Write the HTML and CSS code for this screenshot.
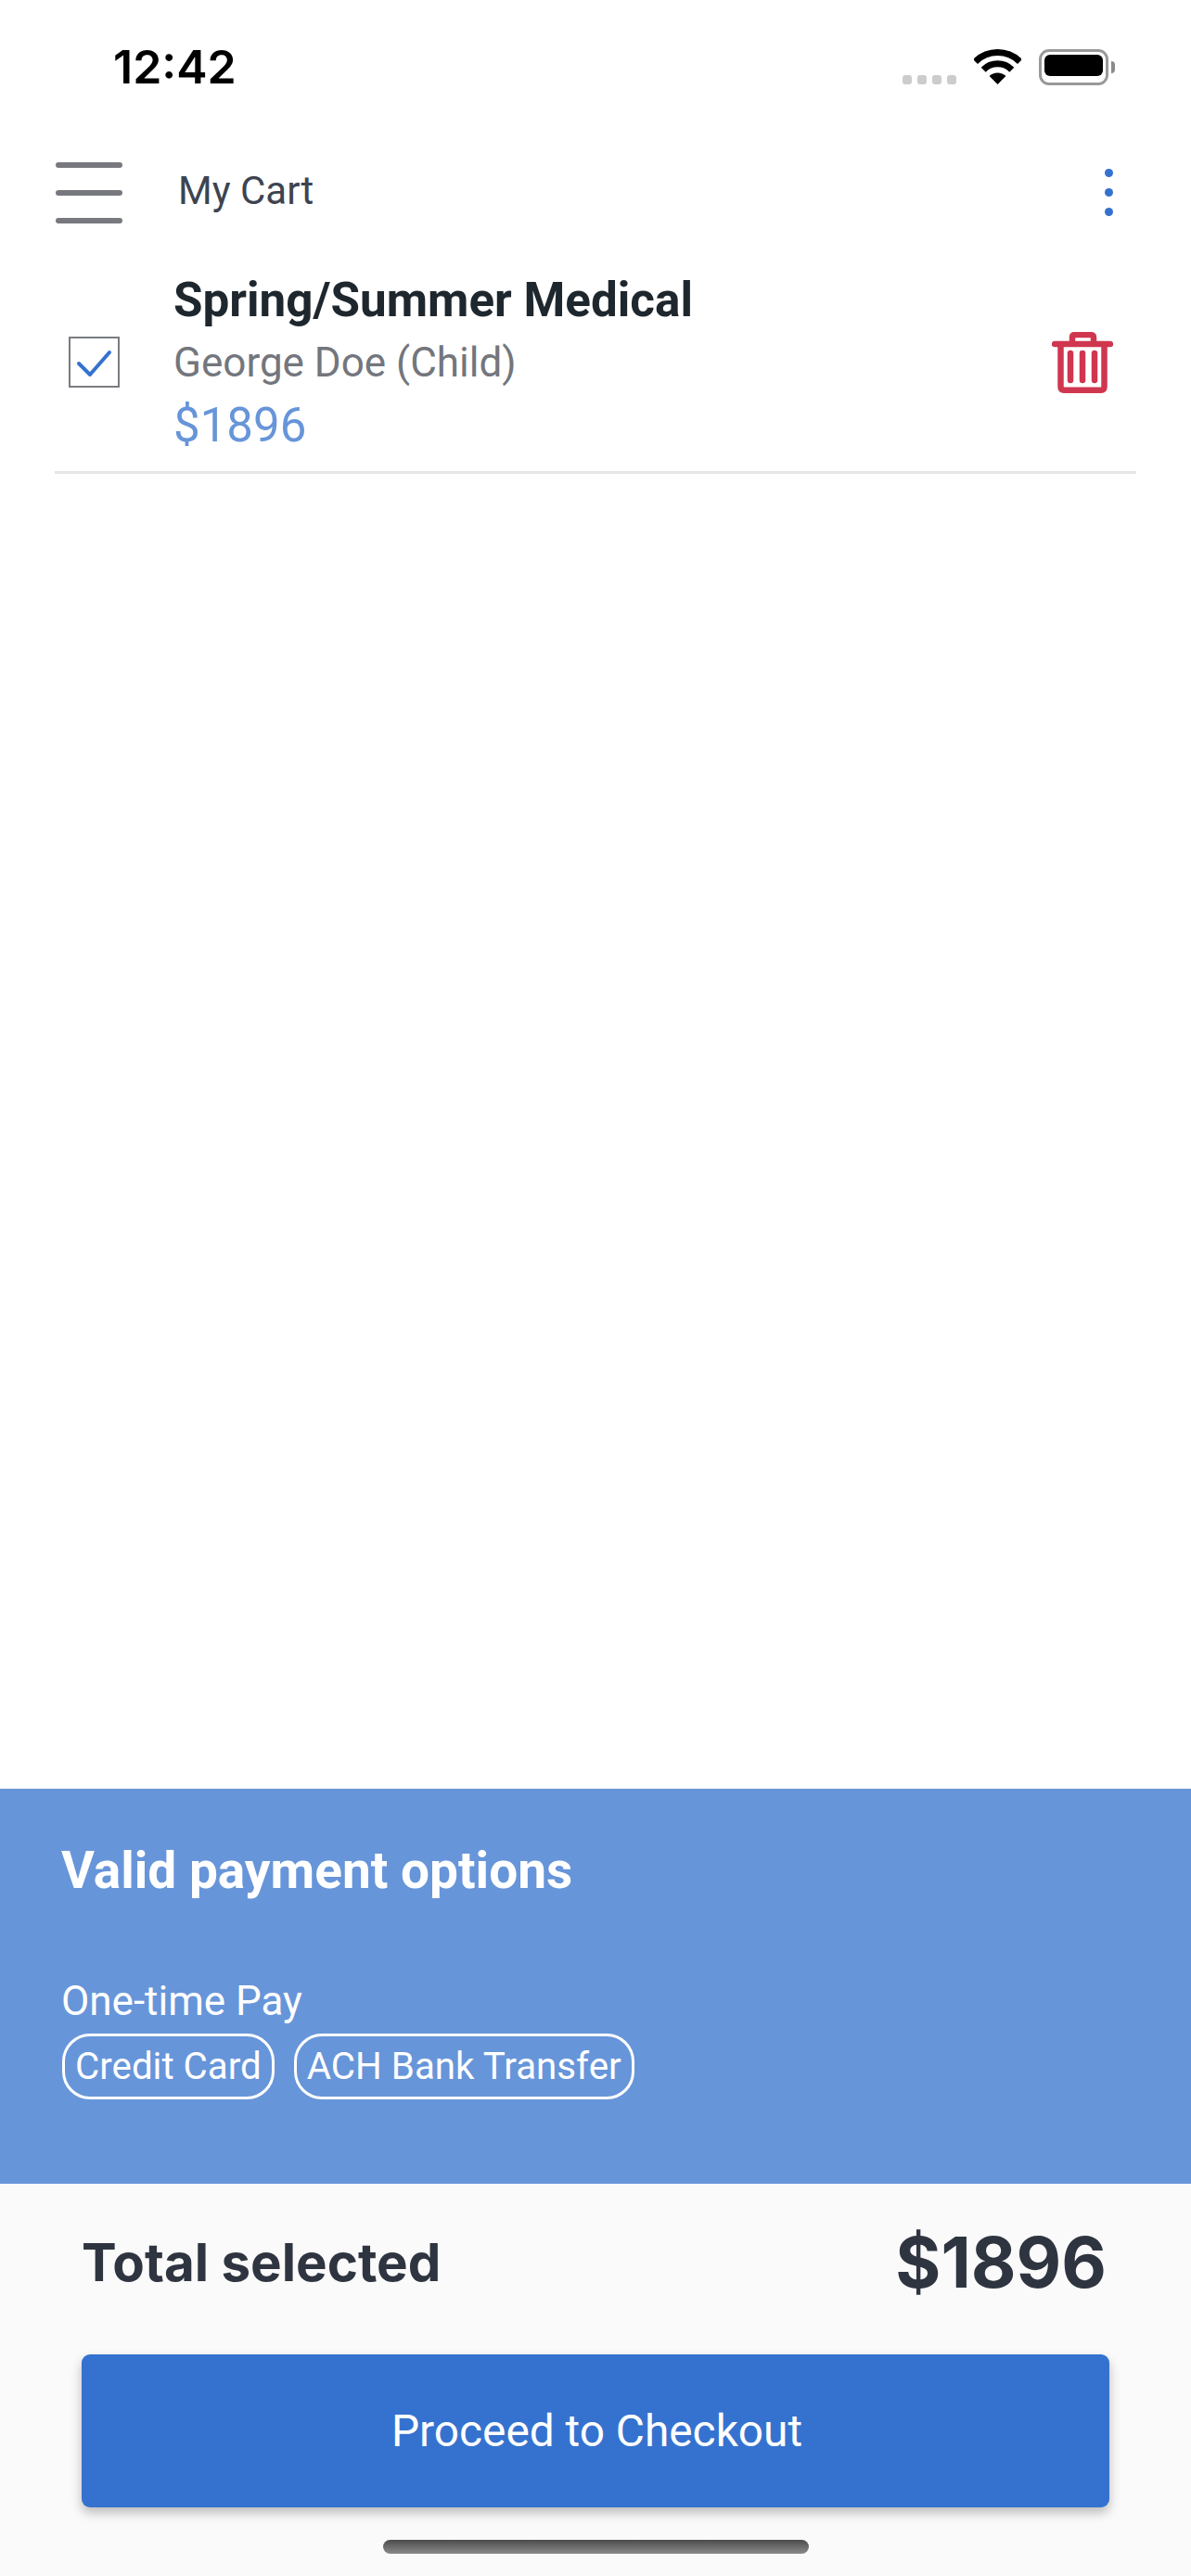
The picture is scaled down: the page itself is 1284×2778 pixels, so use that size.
FILE: index.html
```html
<!DOCTYPE html>
<html lang="en">
<head>
  <meta charset="UTF-8">
  <meta name="viewport" content="width=device-width, initial-scale=1.0">
  <title>My Cart</title>
  <link rel="stylesheet" href="styles.css">
</head>
<body>
  <!-- status bar -->
  <div class="status-bar">
    <span class="clock">12:42</span>
    <div class="status-icons">
      <div class="signal"><i></i><i></i><i></i><i></i></div>
      <svg class="wifi" width="51" height="38" viewBox="0 0 51 38">
        <path d="M1.5 13.5A34 34 0 0 1 49.5 13.5" fill="none" stroke="#000" stroke-width="7"/>
        <path d="M10.2 22.2A21.6 21.6 0 0 1 40.8 22.2" fill="none" stroke="#000" stroke-width="7"/>
        <path d="M25.5 38L16.6 29.1A12.6 12.6 0 0 1 34.4 29.1Z" fill="#000"/>
      </svg>
      <div class="battery"><div class="battery-fill"></div></div>
    </div>
  </div>

  <!-- header -->
  <div class="header">
    <div class="burger"><i></i><i></i><i></i></div>
    <span class="page-title">My Cart</span>
    <div class="more"><i></i><i></i><i></i></div>
  </div>

  <!-- cart -->
  <div class="cart">
    <div class="cart-item">
      <div class="checkbox">
        <svg width="51" height="51" viewBox="0 0 51 51">
          <path d="M9 27L21 39L42 15" fill="none" stroke="#3572cf" stroke-width="4" stroke-linecap="round" stroke-linejoin="round"/>
        </svg>
      </div>
      <div class="item-info">
        <div class="item-name">Spring/Summer Medical</div>
        <div class="item-person">George Doe (Child)</div>
        <div class="item-price">$1896</div>
      </div>
      <svg class="trash" width="66" height="66" viewBox="0 0 66 66">
        <path d="M3 13H63" fill="none" stroke="#d0364f" stroke-width="6.5" stroke-linecap="round"/>
        <path d="M22 11V6Q22 3 25 3H41Q45 3 45 6V11" fill="none" stroke="#d0364f" stroke-width="6.5"/>
        <path d="M9.5 13V59Q9.5 62.700 13 62.700H53Q56.500 62.700 56.500 59V13" fill="none" stroke="#d0364f" stroke-width="6.500"/>
        <path d="M20 23V52M33 23V52M46 23V52" fill="none" stroke="#d0364f" stroke-width="6.500" stroke-linecap="round"/>
      </svg>
    </div>
  </div>

  <!-- payment options -->
  <div class="payment">
    <h2>Valid payment options</h2>
    <div class="pay-type">One-time Pay</div>
    <div class="chips">
      <span class="chip">Credit Card</span>
      <span class="chip">ACH Bank Transfer</span>
    </div>
  </div>

  <!-- total and checkout -->
  <div class="footer">
    <div class="total-row">
      <span class="total-label">Total selected</span>
      <span class="total-value">$1896</span>
    </div>
    <button class="checkout-btn">Proceed to Checkout</button>
    <div class="home-bar"></div>
  </div>
</body>
</html>
```

FILE: styles.css
```css
* {
  margin: 0;
  padding: 0;
  box-sizing: border-box;
}
body {
  width: 1284px;
  height: 2778px;
  display: flex;
  flex-direction: column;
  font-family: Roboto, sans-serif;
  background-color: #fff;
  overflow: hidden;
}

/* status bar */
.status-bar {
  height: 155px;
  flex-shrink: 0;
  display: flex;
  justify-content: space-between;
  align-items: flex-start;
  padding: 42px 89px 0 122px;
}
.clock {
  font-family: Inter, sans-serif;
  font-size: 50px;
  line-height: 60px;
  font-weight: 600;
  color: #000;
}
.status-icons {
  display: flex;
  align-items: flex-end;
  margin-top: 11px;
  height: 39px;
}
.signal {
  display: flex;
  gap: 6px;
  margin-bottom: 1px;
}
.signal i {
  width: 10px;
  height: 10px;
  border-radius: 3px;
  background-color: #ccc;
}
.wifi {
  margin-left: 19px;
  margin-bottom: 1px;
}
.battery {
  position: relative;
  width: 75px;
  height: 39px;
  margin-left: 19px;
  padding: 5px;
  border: 3px solid #999;
  border-radius: 11px;
}
.battery::after {
  content: '';
  position: absolute;
  right: -10px;
  top: 10px;
  width: 4px;
  height: 13px;
  background-color: #8a8a8a;
  border-radius: 0 6px 6px 0;
}
.battery-fill {
  height: 100%;
  margin: -2px;
  background-color: #000;
  border-radius: 6px;
}

/* header */
.header {
  height: 105px;
  flex-shrink: 0;
  display: flex;
  align-items: center;
  padding: 0 84px 0 60px;
}
.burger {
  display: flex;
  flex-direction: column;
  gap: 24px;
  width: 72px;
}
.burger i {
  height: 6px;
  border-radius: 3px;
  background-color: #77797f;
}
.page-title {
  flex: 1;
  margin-left: 60px;
  padding-bottom: 4px;
  font-size: 42px;
  color: #3d4450;
}
.more {
  display: flex;
  flex-direction: column;
  gap: 12px;
}
.more i {
  width: 9px;
  height: 9px;
  border-radius: 50%;
  background-color: #3572cf;
}

/* cart */
.cart {
  flex: 1;
  padding: 13px 59px 0;
}
.cart-item {
  height: 238px;
  display: flex;
  align-items: center;
  padding: 0 25px 0 15px;
  border-bottom: 3px solid #e6e6e6;
}
.checkbox {
  width: 55px;
  height: 55px;
  flex-shrink: 0;
  border: 2px solid #7a7c82;
}
.checkbox svg {
  display: block;
}
.item-info {
  flex: 1;
  margin-left: 58px;
}
.item-name {
  padding-top: 2px;
  font-size: 51.2px;
  line-height: 67px;
  font-weight: 700;
  color: #1f272e;
}
.item-person {
  font-size: 44px;
  line-height: 68px;
  color: #73767d;
}
.item-price {
  font-size: 51px;
  line-height: 68px;
  color: #6795d9;
}

/* payment options */
.payment {
  height: 426px;
  flex-shrink: 0;
  padding: 52px 66px 0;
  background-color: #6795d9;
  color: #fff;
}
.payment h2 {
  font-size: 55px;
  line-height: 72px;
  font-weight: 700;
}
.pay-type {
  margin-top: 77px;
  font-size: 44px;
  line-height: 56px;
}
.chips {
  display: flex;
  gap: 21px;
  margin: 7px 0 0 1px;
}
.chip {
  height: 71px;
  padding: 0 11px;
  border: 3px solid #fff;
  border-radius: 30px;
  font-size: 40.3px;
  line-height: 65px;
}

/* total and checkout */
.footer {
  height: 423px;
  flex-shrink: 0;
  padding: 0 88px;
  background-color: #fafafa;
}
.total-row {
  height: 184px;
  display: flex;
  justify-content: space-between;
  align-items: center;
  padding: 0 3px 15px 0;
  font-family: Inter, sans-serif;
  color: #2f3540;
}
.total-label {
  font-size: 56.5px;
  font-weight: 700;
}
.total-value {
  font-size: 75px;
  font-weight: 700;
}
.checkout-btn {
  display: block;
  width: 100%;
  height: 165px;
  padding-left: 3px;
  border: none;
  border-radius: 9px;
  background-color: #3572cf;
  color: #fff;
  font-family: Roboto, sans-serif;
  font-size: 47.8px;
  box-shadow: 0 6px 12px rgba(0, 0, 0, 0.25);
}
.home-bar {
  width: 459px;
  height: 15px;
  margin: 35px auto 0;
  border-radius: 8px;
  background: linear-gradient(180deg, #4c4c4c, #8a8a8a);
}
```
